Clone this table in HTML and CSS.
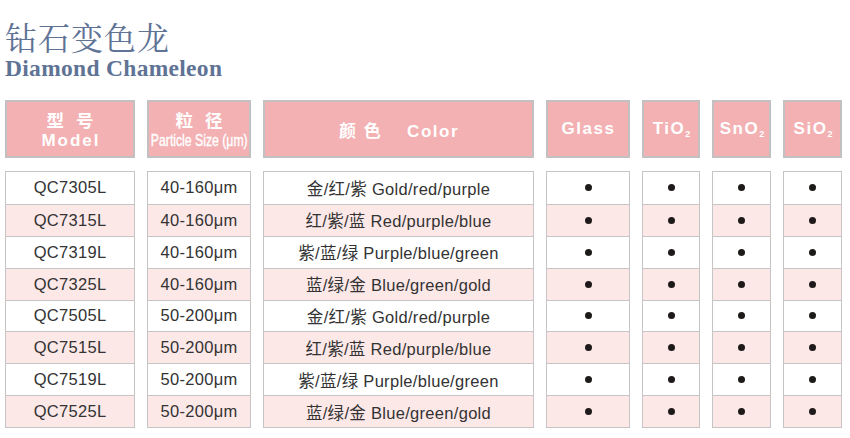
FILE: index.html
```html
<!DOCTYPE html>
<html lang="zh">
<head>
<meta charset="utf-8">
<title>钻石变色龙 Diamond Chameleon</title>
<link rel="stylesheet" href="styles.css">
</head>
<body>
<div class="page">
  <header class="title">
    <h1 class="title-cn">钻石变色龙</h1>
    <h2 class="title-en">Diamond Chameleon</h2>
  </header>
  <div class="table">
    <div class="head"><span class="cn">型&nbsp;号</span><span class="en">Model</span></div>
    <div class="head"><span class="cn">粒&nbsp;径</span><span class="en narrow">Particle Size (μm)</span></div>
    <div class="head"><span class="one">颜&nbsp;色&nbsp;&nbsp;&nbsp;&nbsp;Color</span></div>
    <div class="head"><span class="one">Glass</span></div>
    <div class="head"><span class="one">TiO<sub>2</sub></span></div>
    <div class="head"><span class="one">SnO<sub>2</sub></span></div>
    <div class="head"><span class="one">SiO<sub>2</sub></span></div>

    <div class="col">
      <div class="cell">QC7305L</div><div class="cell">QC7315L</div><div class="cell">QC7319L</div><div class="cell">QC7325L</div>
      <div class="cell">QC7505L</div><div class="cell">QC7515L</div><div class="cell">QC7519L</div><div class="cell">QC7525L</div>
    </div>
    <div class="col">
      <div class="cell">40-160μm</div><div class="cell">40-160μm</div><div class="cell">40-160μm</div><div class="cell">40-160μm</div>
      <div class="cell">50-200μm</div><div class="cell">50-200μm</div><div class="cell">50-200μm</div><div class="cell">50-200μm</div>
    </div>
    <div class="col">
      <div class="cell">金/红/紫 Gold/red/purple</div>
      <div class="cell">红/紫/蓝 Red/purple/blue</div>
      <div class="cell">紫/蓝/绿 Purple/blue/green</div>
      <div class="cell">蓝/绿/金 Blue/green/gold</div>
      <div class="cell">金/红/紫 Gold/red/purple</div>
      <div class="cell">红/紫/蓝 Red/purple/blue</div>
      <div class="cell">紫/蓝/绿 Purple/blue/green</div>
      <div class="cell">蓝/绿/金 Blue/green/gold</div>
    </div>
    <div class="col">
      <div class="cell"><i class="dot"></i></div><div class="cell"><i class="dot"></i></div><div class="cell"><i class="dot"></i></div><div class="cell"><i class="dot"></i></div>
      <div class="cell"><i class="dot"></i></div><div class="cell"><i class="dot"></i></div><div class="cell"><i class="dot"></i></div><div class="cell"><i class="dot"></i></div>
    </div>
    <div class="col">
      <div class="cell"><i class="dot"></i></div><div class="cell"><i class="dot"></i></div><div class="cell"><i class="dot"></i></div><div class="cell"><i class="dot"></i></div>
      <div class="cell"><i class="dot"></i></div><div class="cell"><i class="dot"></i></div><div class="cell"><i class="dot"></i></div><div class="cell"><i class="dot"></i></div>
    </div>
    <div class="col">
      <div class="cell"><i class="dot"></i></div><div class="cell"><i class="dot"></i></div><div class="cell"><i class="dot"></i></div><div class="cell"><i class="dot"></i></div>
      <div class="cell"><i class="dot"></i></div><div class="cell"><i class="dot"></i></div><div class="cell"><i class="dot"></i></div><div class="cell"><i class="dot"></i></div>
    </div>
    <div class="col">
      <div class="cell"><i class="dot"></i></div><div class="cell"><i class="dot"></i></div><div class="cell"><i class="dot"></i></div><div class="cell"><i class="dot"></i></div>
      <div class="cell"><i class="dot"></i></div><div class="cell"><i class="dot"></i></div><div class="cell"><i class="dot"></i></div><div class="cell"><i class="dot"></i></div>
    </div>
  </div>
</div>
</body>
</html>
```
FILE: styles.css
```css
html, body {
  margin: 0;
  padding: 0;
  background: #ffffff;
}
.page {
  width: 850px;
  height: 438px;
  padding: 20px 0 0 5px;
  box-sizing: border-box;
  font-family: "Liberation Sans", Arial, "Noto Sans CJK SC", sans-serif;
}
.title {
  color: #5f7395;
}
.title-cn {
  margin: 0;
  font-family: "Noto Serif CJK SC", "Noto Sans CJK SC", serif;
  font-weight: 400;
  font-size: 32px;
  line-height: 32px;
  letter-spacing: 1px;
}
.title-en {
  margin: 3px 0 0 0;
  font-family: "Liberation Serif", "Times New Roman", serif;
  font-weight: bold;
  font-size: 23.5px;
  line-height: 26px;
  letter-spacing: 0.3px;
}
.table {
  margin-top: 19px;
  display: grid;
  grid-template-columns: 130px 104px 271px 84px 58px 59px 59px;
  grid-template-rows: 58px 257px;
  column-gap: 12px;
  row-gap: 13px;
}
.head {
  background: #f3b1b3;
  border: 2px solid #c2c0c0;
  box-sizing: border-box;
  display: flex;
  flex-direction: column;
  align-items: center;
  justify-content: center;
  color: #ffffff;
  font-weight: bold;
  font-family: "Liberation Sans", Arial, "Noto Sans CJK SC", sans-serif;
}
.head .cn {
  font-family: "Noto Sans CJK SC", sans-serif;
  font-size: 17.5px;
  line-height: 18px;
  letter-spacing: 4px;
  margin-left: 4px;
  margin-top: 4px;
  margin-bottom: 2px;
}
.head .en {
  font-size: 17px;
  line-height: 20px;
  letter-spacing: 2px;
  margin-left: 2px;
  white-space: nowrap;
}
.head .en.narrow {
  display: inline-block;
  font-weight: normal;
  font-size: 17px;
  letter-spacing: 0;
  margin-left: 0;
  -webkit-text-stroke: 0.4px #ffffff;
  transform: scaleX(0.72);
}
.head .one {
  font-size: 17px;
  letter-spacing: 1.5px;
  margin-left: 1px;
  white-space: nowrap;
}
.head sub {
  font-size: 9px;
  vertical-align: -3px;
  letter-spacing: 0;
}
.col {
  border: 1.5px solid #c6c4c4;
  box-sizing: border-box;
  display: grid;
  grid-template-rows: repeat(8, 1fr);
}
.cell {
  display: flex;
  align-items: center;
  justify-content: center;
  font-size: 16.5px;
  color: #333333;
  white-space: nowrap;
  letter-spacing: 0.3px;
}
.col .cell + .cell {
  border-top: 1px solid #c6c4c4;
}
.col .cell:nth-child(even) {
  background: #fde8e8;
}
.dot {
  width: 7px;
  height: 7px;
  border-radius: 50%;
  background: #1e1a1a;
  display: block;
}
```
